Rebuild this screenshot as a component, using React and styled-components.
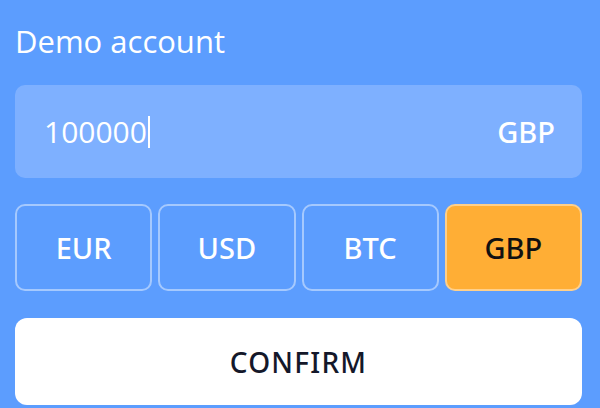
import React from "react";
import styled, { createGlobalStyle } from "styled-components";

const Global = createGlobalStyle`
  html, body { margin: 0; padding: 0; background: #5c9dfe; }
  body { font-family: "Open Sans", "Noto Sans", sans-serif; }
`;

const Page = styled.div`
  width: 600px;
  height: 408px;
  box-sizing: border-box;
  padding: 20px 18px 0 15px;
  background: #5c9dfe;
  display: flex;
  flex-direction: column;
`;

const Label = styled.div`
  color: #ffffff;
  font-size: 31px;
  line-height: 42px;
  font-weight: 400;
  margin-bottom: 23px;
`;

const InputBox = styled.div`
  height: 93px;
  border-radius: 10px;
  background: #7eb0ff;
  display: flex;
  align-items: center;
  justify-content: space-between;
  padding: 0 27px 0 29px;
  color: #fff;
  margin-bottom: 26px;
`;

const Value = styled.div`
  font-size: 30px;
  font-weight: 400;
  display: flex;
  align-items: center;
`;

const Caret = styled.span`
  display: inline-block;
  width: 2px;
  height: 32px;
  background: #fff;
  margin-left: 1px;
`;

const Unit = styled.div`
  font-family: "Noto Sans", sans-serif;
  font-size: 29px;
  font-weight: 500;
`;

const Row = styled.div`
  display: grid;
  grid-template-columns: repeat(4, 1fr);
  gap: 6px;
  margin-bottom: 27px;
`;

const Cur = styled.button`
  height: 87px;
  box-sizing: border-box;
  border-radius: 10px;
  border: 2px solid ${(p) => (p.$active ? "#ffd08a" : "rgba(255,255,255,0.45)")};
  background: ${(p) => (p.$active ? "#ffae35" : "transparent")};
  color: ${(p) => (p.$active ? "#111" : "#fff")};
  font-family: "Noto Sans", sans-serif;
  font-size: 29px;
  font-weight: 500;
  padding: 0;
`;

const Confirm = styled.button`
  height: 87px;
  border: none;
  border-radius: 12px;
  background: #fff;
  color: #14182a;
  font-family: "Noto Sans", sans-serif;
  font-size: 28px;
  font-weight: 500;
  letter-spacing: 1.2px;
`;

export default function App() {
  const items = ["EUR", "USD", "BTC", "GBP"];
  return (
    <>
      <Global />
      <Page>
        <Label>Demo account</Label>
        <InputBox>
          <Value>
            100000
            <Caret />
          </Value>
          <Unit>GBP</Unit>
        </InputBox>
        <Row>
          {items.map((c) => (
            <Cur key={c} $active={c === "GBP"}>
              {c}
            </Cur>
          ))}
        </Row>
        <Confirm>CONFIRM</Confirm>
      </Page>
    </>
  );
}
